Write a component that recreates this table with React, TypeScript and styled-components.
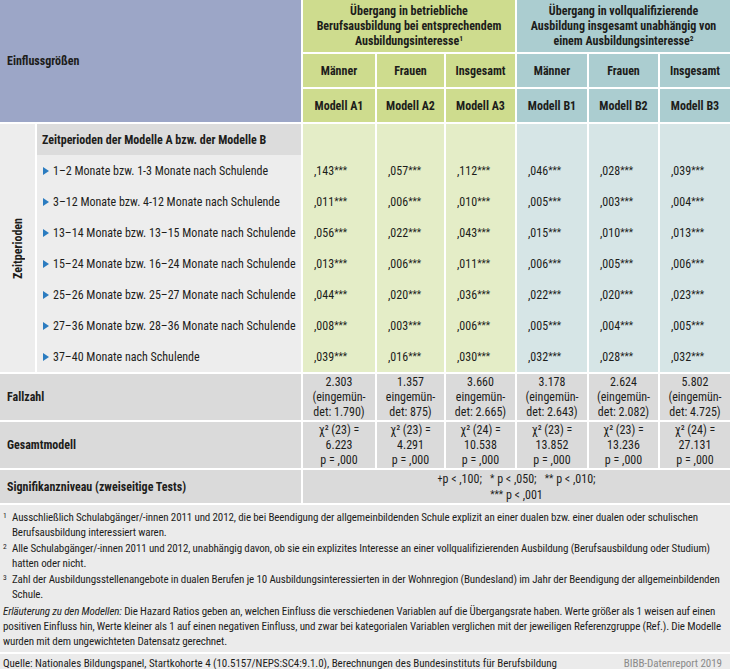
import React from "react";
import styled, { createGlobalStyle } from "styled-components";

const FONT = `"Roboto Condensed", "Liberation Sans", sans-serif`;

const Global = createGlobalStyle`
  html, body { margin: 0; padding: 0; background: #ffffff; }
  body { font-family: ${FONT}; color: #1d1d1b; }
`;

const COLS = "35px 264px 72px 67px 69px 70px 69px 70px";

type Tone = "green" | "teal";
const HEAD: Record<Tone, string> = { green: "#cedc8e", teal: "#abcdd0" };
const BODY: Record<Tone, string> = { green: "#e4edc7", teal: "#d6e5e6" };
const tones: Tone[] = ["green", "green", "green", "teal", "teal", "teal"];

const Page = styled.div`
  width: 730px;
  display: flex;
  flex-direction: column;
  gap: 2px;
  background: #ffffff;
`;

const Grid = styled.div<{ $rows: string; $rowGap?: number }>`
  display: grid;
  grid-template-columns: ${COLS};
  grid-template-rows: ${(p) => p.$rows};
  column-gap: 2px;
  row-gap: ${(p) => p.$rowGap ?? 2}px;
`;

const CornerCell = styled.div`
  grid-column: 1 / 3;
  grid-row: 1 / 4;
  background: #9ca6c7;
  display: flex;
  align-items: center;
  padding-left: 7px;
  font-weight: 700;
  font-size: 12px;
`;

const GroupHead = styled.div<{ $tone: Tone; $col: string }>`
  grid-column: ${(p) => p.$col};
  grid-row: 1;
  background: ${(p) => HEAD[p.$tone]};
  display: flex;
  align-items: center;
  justify-content: center;
  text-align: center;
  font-weight: 700;
  font-size: 12px;
  line-height: 15px;
`;

const SubHead = styled.div<{ $tone: Tone }>`
  background: ${(p) => HEAD[p.$tone]};
  display: flex;
  align-items: center;
  justify-content: center;
  font-weight: 700;
  font-size: 12px;
`;

const Sup = styled.sup`
  font-size: 7.5px;
  line-height: 0;
  vertical-align: 4px;
`;

const SideLabel = styled.div`
  grid-column: 1;
  grid-row: 1 / 9;
  background: #ededed;
  display: flex;
  align-items: center;
  justify-content: center;
`;

const Rotated = styled.span`
  writing-mode: vertical-rl;
  transform: rotate(180deg);
  font-weight: 700;
  font-size: 12px;
`;

const RowLabel = styled.div<{ $head?: boolean }>`
  grid-column: 2;
  background: ${(p) => (p.$head ? "#dcdcdc" : "#ededed")};
  display: flex;
  align-items: center;
  gap: 4px;
  padding-left: ${(p) => (p.$head ? 5 : 6)}px;
  font-size: 12px;
  font-weight: ${(p) => (p.$head ? 700 : 400)};
  white-space: nowrap;
`;

const Bullet = styled.svg`
  width: 6px;
  height: 8px;
  flex: none;
`;

const ValueCell = styled.div<{ $tone: Tone }>`
  background: ${(p) => BODY[p.$tone]};
  display: flex;
  align-items: center;
  padding-left: 11px;
  font-size: 12px;
`;

const Stars = styled.span`
  font-size: 10px;
  vertical-align: 1px;
`;

const FootLabel = styled.div`
  grid-column: 1 / 3;
  background: #dadada;
  display: flex;
  align-items: center;
  padding-left: 7px;
  font-weight: 700;
  font-size: 12px;
`;

const StatCell = styled.div`
  background: #dadada;
  display: flex;
  flex-direction: column;
  align-items: center;
  justify-content: center;
  font-size: 12px;
  line-height: 15px;
  text-align: center;
`;

const SigCell = styled(StatCell)`
  grid-column: 3 / 9;
`;

const Notes = styled.div`
  background: #ebebeb;
  padding: 5px 6px 3px 3px;
  display: flex;
  flex-direction: column;
  gap: 1px;
  font-size: 11px;
  letter-spacing: -0.13px;
  line-height: 15px;
`;

const Note = styled.div`
  display: grid;
  grid-template-columns: 9px 1fr;
  white-space: nowrap;
`;

const NoteNum = styled.span`
  font-size: 7.5px;
  line-height: 12px;
`;

const Para = styled.div`
  white-space: nowrap;
  padding-top: 1px;
`;

const SourceBar = styled.div`
  background: #ebebeb;
  height: 19px;
  display: flex;
  align-items: center;
  justify-content: space-between;
  padding: 0 8px 0 3px;
  font-size: 11px;
  letter-spacing: -0.05px;
`;

const Brand = styled.span`
  color: #8a8a8a;
`;

const rows: string[][] = [
  ["1–2 Monate bzw. 1-3 Monate nach Schulende", ",143", ",057", ",112", ",046", ",028", ",039"],
  ["3–12 Monate bzw. 4-12 Monate nach Schulende", ",011", ",006", ",010", ",005", ",003", ",004"],
  ["13–14 Monate bzw. 13–15 Monate nach Schulende", ",056", ",022", ",043", ",015", ",010", ",013"],
  ["15–24 Monate bzw. 16–24 Monate nach Schulende", ",013", ",006", ",011", ",006", ",005", ",006"],
  ["25–26 Monate bzw. 25–27 Monate nach Schulende", ",044", ",020", ",036", ",022", ",020", ",023"],
  ["27–36 Monate bzw. 28–36 Monate nach Schulende", ",008", ",003", ",006", ",005", ",004", ",005"],
  ["37–40 Monate nach Schulende", ",039", ",016", ",030", ",032", ",028", ",032"],
];

const fallzahl: string[][] = [
  ["2.303", "(eingemün-", "det: 1.790)"],
  ["1.357", "eingemün-", "det: 875)"],
  ["3.660", "eingemün-", "det: 2.665)"],
  ["3.178", "(eingemün-", "det: 2.643)"],
  ["2.624", "(eingemün-", "det: 2.082)"],
  ["5.802", "(eingemün-", "det: 4.725)"],
];

const gesamt: string[][] = [
  ["χ² (23) =", "6.223", "p = ,000"],
  ["χ² (23) =", "4.291", "p = ,000"],
  ["χ² (24) =", "10.538", "p = ,000"],
  ["χ² (23) =", "13.852", "p = ,000"],
  ["χ² (23) =", "13.236", "p = ,000"],
  ["χ² (24) =", "27.131", "p = ,000"],
];

const subs = ["Männer", "Frauen", "Insgesamt", "Männer", "Frauen", "Insgesamt"];
const models = ["Modell A1", "Modell A2", "Modell A3", "Modell B1", "Modell B2", "Modell B3"];

export default function App() {
  return (
    <Page>
      <Global />
      <Grid $rows="52px 33px 33px">
        <CornerCell>Einflussgrößen</CornerCell>
        <GroupHead $tone="green" $col="3 / 6">
          <div>
            Übergang in betriebliche
            <br />
            Berufsausbildung bei entsprechendem
            <br />
            Ausbildungsinteresse<Sup>1</Sup>
          </div>
        </GroupHead>
        <GroupHead $tone="teal" $col="6 / 9">
          <div>
            Übergang in vollqualifizierende
            <br />
            Ausbildung insgesamt unabhängig von
            <br />
            einem Ausbildungsinteresse<Sup>2</Sup>
          </div>
        </GroupHead>
        {subs.map((s, i) => (
          <SubHead key={"s" + i} $tone={tones[i]}>
            {s}
          </SubHead>
        ))}
        {models.map((m, i) => (
          <SubHead key={"m" + i} $tone={tones[i]}>
            {m}
          </SubHead>
        ))}
      </Grid>

      <Grid $rows="repeat(8, 31px)" $rowGap={0}>
        <SideLabel>
          <Rotated>Zeitperioden</Rotated>
        </SideLabel>
        <RowLabel $head>Zeitperioden der Modelle A bzw. der Modelle B</RowLabel>
        {tones.map((t, i) => (
          <ValueCell key={"h" + i} $tone={t} />
        ))}
        {rows.map((r, ri) => (
          <React.Fragment key={ri}>
            <RowLabel>
              <Bullet viewBox="0 0 6 8">
                <path d="M0 0 L6 4 L0 8 Z" fill="#2b7cc0" />
              </Bullet>
              {r[0]}
            </RowLabel>
            {r.slice(1).map((v, ci) => (
              <ValueCell key={ci} $tone={tones[ci]}>
                {v}
                <Stars>***</Stars>
              </ValueCell>
            ))}
          </React.Fragment>
        ))}
      </Grid>

      <Grid $rows="46px 46px 33px">
        <FootLabel>Fallzahl</FootLabel>
        {fallzahl.map((f, i) => (
          <StatCell key={"f" + i}>
            {f.map((l, j) => (
              <span key={j}>{l}</span>
            ))}
          </StatCell>
        ))}
        <FootLabel>Gesamtmodell</FootLabel>
        {gesamt.map((f, i) => (
          <StatCell key={"g" + i}>
            {f.map((l, j) => (
              <span key={j}>{l}</span>
            ))}
          </StatCell>
        ))}
        <FootLabel>Signifikanzniveau (zweiseitige Tests)</FootLabel>
        <SigCell>
          <span>
            <Stars>+</Stars>p &lt; ,100;&nbsp;&nbsp; <Stars>*</Stars> p &lt; ,050;&nbsp;&nbsp; <Stars>**</Stars> p &lt; ,010;
          </span>
          <span>
            <Stars>***</Stars> p &lt; ,001
          </span>
        </SigCell>
      </Grid>

      <Notes>
        <Note>
          <NoteNum>1</NoteNum>
          <span>
            Ausschließlich Schulabgänger/-innen 2011 und 2012, die bei Beendigung der allgemeinbildenden Schule explizit an einer dualen bzw. einer dualen oder schulischen
            <br />
            Berufsausbildung interessiert waren.
          </span>
        </Note>
        <Note>
          <NoteNum>2</NoteNum>
          <span>
            Alle Schulabgänger/-innen 2011 und 2012, unabhängig davon, ob sie ein explizites Interesse an einer vollqualifizierenden Ausbildung (Berufsausbildung oder Studium)
            <br />
            hatten oder nicht.
          </span>
        </Note>
        <Note>
          <NoteNum>3</NoteNum>
          <span>
            Zahl der Ausbildungsstellenangebote in dualen Berufen je 10 Ausbildungsinteressierten in der Wohnregion (Bundesland) im Jahr der Beendigung der allgemeinbildenden
            <br />
            Schule.
          </span>
        </Note>
        <Para>
          <em>Erläuterung zu den Modellen:</em> Die Hazard Ratios geben an, welchen Einfluss die verschiedenen Variablen auf die Übergangsrate haben. Werte größer als 1 weisen auf einen
          <br />
          positiven Einfluss hin, Werte kleiner als 1 auf einen negativen Einfluss, und zwar bei kategorialen Variablen verglichen mit der jeweiligen Referenzgruppe (Ref.). Die Modelle
          <br />
          wurden mit dem ungewichteten Datensatz gerechnet.
        </Para>
      </Notes>
      <SourceBar>
        <span>Quelle: Nationales Bildungspanel, Startkohorte 4 (10.5157/NEPS:SC4:9.1.0), Berechnungen des Bundesinstituts für Berufsbildung</span>
        <Brand>BIBB-Datenreport 2019</Brand>
      </SourceBar>
    </Page>
  );
}
